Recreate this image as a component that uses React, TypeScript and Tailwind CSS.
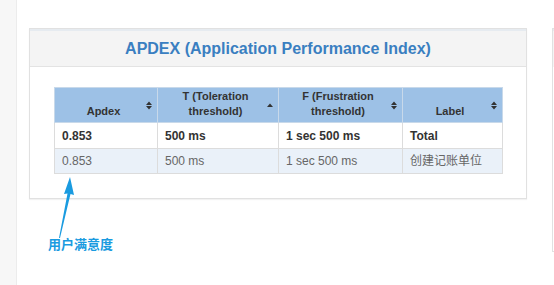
import React from 'react';

const font = { fontFamily: '"Liberation Sans", Arial, "Noto Sans CJK SC", sans-serif' };

const SortBoth = () => (
  <svg width="6" height="9" viewBox="0 0 6 9" className="shrink-0">
    <path d="M0 4 L3 0.5 L6 4 Z M0 5 L3 8.5 L6 5 Z" fill="#333" />
  </svg>
);

const SortUp = () => (
  <svg width="6" height="4" viewBox="0 0 6 4" className="shrink-0">
    <path d="M0 4 L3 0.5 L6 4 Z" fill="#333" />
  </svg>
);

interface Col {
  lines: string[];
  width: string;
  up?: boolean;
}

const cols: Col[] = [
  { lines: ['Apdex'], width: 'w-[103px]' },
  { lines: ['T (Toleration', 'threshold)'], width: 'w-[121px]', up: true },
  { lines: ['F (Frustration', 'threshold)'], width: 'w-[124px]' },
  { lines: ['Label'], width: 'w-[100px]' },
];

const rows = [
  { cells: ['0.853', '500 ms', '1 sec 500 ms', 'Total'], bold: true },
  { cells: ['0.853', '500 ms', '1 sec 500 ms', '创建记账单位'], bold: false },
];

export default function App() {
  return (
    <div className="relative flex h-[285px] w-[554px] overflow-hidden bg-white" style={font}>
      <div className="w-[17px] shrink-0 border-r border-[#ececec] bg-[#f7f7f7]" />
      <div className="ml-[12px] mt-[28px] w-[498px] shrink-0 self-start border border-[#e1e1e1] bg-white shadow-[0_1px_1px_rgba(0,0,0,0.05)]">
        <div className="flex h-[38px] items-center justify-center border-b border-t-2 border-b-[#e3e3e3] border-t-[#e6ebf0] bg-[#f4f4f4]">
          <h1 className="text-[16px] font-bold text-[#3a7fc1]">APDEX (Application Performance Index)</h1>
        </div>
        <div className="px-[24px] pb-[24px] pt-[20px]">
          <table className="w-[448px] table-fixed border-collapse text-[12px]">
            <thead>
              <tr className="bg-[#9dc1e6]">
                {cols.map((c) => (
                  <th key={c.lines[0]} className={`${c.width} h-[34px] border border-[#c8d9ea] p-0`}>
                    <div className="flex h-[34px] items-stretch pl-[6px] pr-[5px]">
                      <div className="flex flex-1 flex-col justify-end pb-[3px] text-center text-[11px] font-bold leading-[15px] text-[#333]">
                        {c.lines.map((l) => (
                          <div key={l}>{l}</div>
                        ))}
                      </div>
                      <div className="flex items-center">{c.up ? <SortUp /> : <SortBoth />}</div>
                    </div>
                  </th>
                ))}
              </tr>
            </thead>
            <tbody>
              {rows.map((r, i) => (
                <tr key={i} className={r.bold ? 'h-[26px] bg-white' : 'h-[25px] bg-[#eaf1f9]'}>
                  {r.cells.map((c, j) => (
                    <td
                      key={j}
                      className={`border border-[#dcdcdc] px-[7px] py-0 ${r.bold ? 'font-bold text-[#333]' : 'text-[#666]'}`}
                    >
                      {c}
                    </td>
                  ))}
                </tr>
              ))}
            </tbody>
          </table>
        </div>
      </div>
      <div className="ml-[25px] mt-[28px] h-[224px] w-[20px] shrink-0 self-start border border-[#e1e1e1] bg-white">
        <div className="h-[38px] border-t-2 border-[#e6ebf0] bg-[#f4f4f4]" />
      </div>

      <svg className="absolute left-[52px] top-[174px]" width="26" height="66" viewBox="0 0 26 66">
        <path d="M18 3 L12 20 L15.5 19.5 L7 64 L8 64 L18.5 20 L22 21 Z" fill="#1a9be0" />
      </svg>
      <div className="absolute left-[48px] top-[237px] text-[13px] font-bold leading-[16px] text-[#1a9be0]">用户满意度</div>
    </div>
  );
}
